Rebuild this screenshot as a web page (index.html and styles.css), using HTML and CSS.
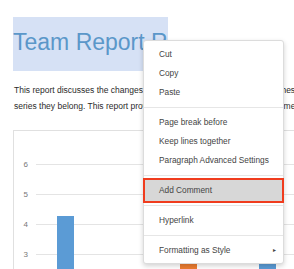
FILE: index.html
```html
<!DOCTYPE html>
<html lang="en">
<head>
  <meta charset="UTF-8">
  <title>Team Report</title>
  <link rel="stylesheet" href="styles.css">
</head>
<body>

<div class="page">
  <h1 class="title"><span class="selected">Team Report R</span></h1>

  <p class="text">
    <span class="line">This report discusses the changes in the metric for each of the approaches</span>
    <span class="line">series they belong. This report provides a summary of the results over time</span>
  </p>

  <div class="chart">
    <div class="rows">
      <div class="row"><span class="tick">6</span><span class="grid"></span></div>
      <div class="row"><span class="tick">5</span><span class="grid"></span></div>
      <div class="row"><span class="tick">4</span><span class="grid"></span></div>
      <div class="row"><span class="tick">3</span><span class="grid"></span></div>
      <div class="row"><span class="tick">2</span><span class="grid"></span></div>
      <div class="bars">
        <div class="bar blue" style="left: 43px; top: 67px;"></div>
        <div class="bar orange" style="left: 166px; top: 99px;"></div>
        <div class="bar blue" style="left: 245px; top: 99px;"></div>
      </div>
    </div>
  </div>
</div>

<ul class="menu">
  <li class="item">Cut</li>
  <li class="item">Copy</li>
  <li class="item">Paste</li>
  <li class="sep"></li>
  <li class="item">Page break before</li>
  <li class="item">Keep lines together</li>
  <li class="item">Paragraph Advanced Settings</li>
  <li class="sep"></li>
  <li class="item active">Add Comment</li>
  <li class="sep"></li>
  <li class="item">Hyperlink</li>
  <li class="sep"></li>
  <li class="item sub">Formatting as Style <span class="arrow">&#9656;</span></li>
</ul>

</body>
</html>
```

FILE: styles.css
```css
html, body { margin: 0; background: #fff; overflow: hidden; }
body { font-family: "Liberation Sans", Arial, sans-serif; width: 294px; height: 269px; position: relative; }

.page { padding: 17px 0 0 13px; }

.title { margin: 0; font-size: 23px; font-weight: normal; color: #5b97c9; line-height: 50px; padding-bottom: 4px; white-space: nowrap; }
.title .selected { background: #d6e1f5; display: inline-block; height: 54px; margin-bottom: -4px; }

.text { margin: 11px 0 0; font-size: 8.5px; color: #2b2b2b; white-space: nowrap; }
.text .line { display: block; line-height: 16px; padding-left: 1px; }

.chart { margin-top: 16px; width: 420px; border: 1px solid #e0e0e0; padding-top: 18px; }
.rows { position: relative; }
.row { display: flex; align-items: center; height: 30px; }
.tick { width: 14px; padding-right: 8px; text-align: right; font-size: 8px; color: #777; }
.grid { flex: 1; height: 1px; background: #e4e4e4; }
.bars { position: absolute; inset: 0; }
.bar { position: absolute; width: 17px; bottom: 0; }
.blue { background: #5b9bd5; }
.orange { background: #ed7d31; }

.menu { position: absolute; left: 143px; top: 40px; width: 139px; margin: 0; padding: 4px 0 3px; list-style: none;
  background: #fff; border: 1px solid #dcdcdc; border-radius: 3px; box-shadow: 0 2px 5px rgba(0, 0, 0, 0.18);
  font-size: 8.3px; color: #444; }
.item { height: 19px; line-height: 19px; margin: 0 2px; padding-left: 13px; white-space: nowrap; }
.item.active { background: #d7d7d7; box-shadow: 0 0 0 1px #d7d7d7, 0 0 0 3px #f03c1e; }
.item.sub { display: flex; justify-content: space-between; padding-right: 5px; }
.arrow { font-size: 6px; }
.sep { height: 1px; margin: 5px 0; background: #e6e6e6; }
```
